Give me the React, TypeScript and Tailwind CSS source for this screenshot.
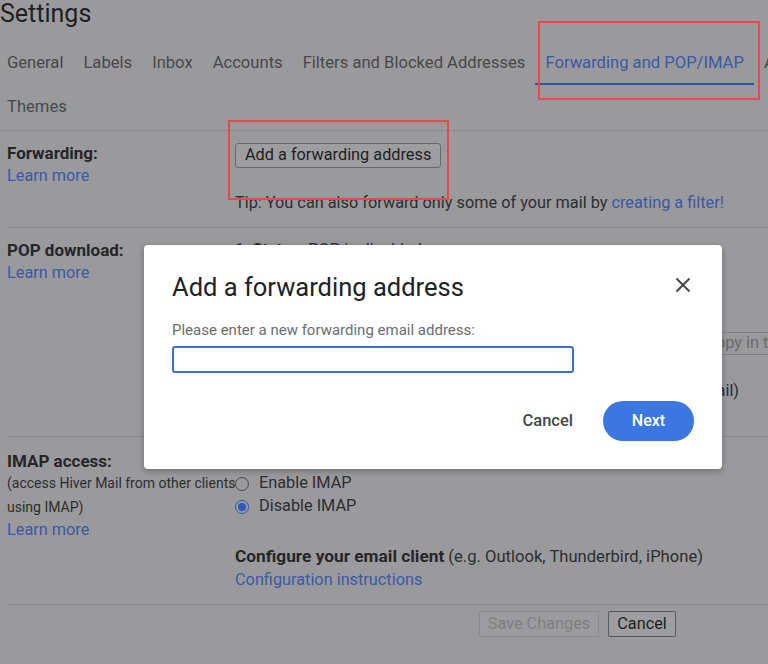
import React from "react";

const tabs = [
  "General",
  "Labels",
  "Inbox",
  "Accounts",
  "Filters and Blocked Addresses",
  "Forwarding and POP/IMAP",
  "Add-ons",
];

function Radio({ checked, label }: { checked?: boolean; label: string }) {
  return (
    <label className="flex items-center h-[23px] text-[16.3px] text-[#2d2d2f]">
      <span
        className={
          checked
            ? "w-[14px] h-[14px] rounded-full border border-[#2c58c0] flex items-center justify-center"
            : "w-[14px] h-[14px] rounded-full border border-[#4a4a4c]"
        }
      >
        {checked && <span className="w-[8px] h-[8px] rounded-full bg-[#2c58c0]" />}
      </span>
      <span className="ml-[10px]">{label}</span>
    </label>
  );
}

function Divider({ inset }: { inset?: boolean }) {
  return <div className={inset ? "ml-[7px] h-px bg-[#8b8b8d]" : "h-px bg-[#8b8b8d]"} />;
}

export default function App() {
  return (
    <div className="relative w-[768px] h-[664px] overflow-hidden bg-[#9a9a9c] font-['Roboto',sans-serif] text-[#2d2d2f]">
      <div className="w-[1000px]">
        <h1 className="h-[40px] text-[25px] leading-[28px] text-[#1f1f21]">Settings</h1>

        <nav className="flex h-[45px] ml-[-1px] whitespace-nowrap text-[16.6px] text-[#48484a]">
          {tabs.map((t) =>
            t === "Forwarding and POP/IMAP" ? (
              <div
                key={t}
                className="flex items-center px-[10px] pt-[4px] border-b-2 border-[#2f4f9f] text-[#3a58a6]"
              >
                {t}
              </div>
            ) : (
              <div key={t} className="flex items-center px-[10px] pt-[2px] first:pl-[8px]">
                {t}
              </div>
            )
          )}
        </nav>
        <div className="flex items-center h-[45px] pl-[7px] text-[16.6px] text-[#48484a]">Themes</div>
        <Divider />

        {/* Forwarding */}
        <section className="flex pl-[7px] pt-[12px] pb-[14px] text-[16.3px]">
          <div className="w-[228px] shrink-0">
            <div className="text-[17px] font-bold leading-[20px] text-[#262628]">Forwarding:</div>
            <div className="mt-[3px] leading-[20px] text-[#3a58a6]">Learn more</div>
          </div>
          <div>
            <button className="h-[25px] px-[9px] border border-[#6a6a6c] rounded-[3px] bg-[#9e9ea0] text-[16.3px] leading-none text-[#1f1f21]">
              Add a forwarding address
            </button>
            <div className="mt-[25px] leading-[20px] whitespace-nowrap">
              Tip: You can also forward only some of your mail by{" "}
              <span className="text-[#3a58a6]">creating a filter!</span>
            </div>
          </div>
        </section>
        <Divider inset />

        {/* POP */}
        <section className="flex pl-[7px] pt-[12px] pb-[12px] text-[16.3px]">
          <div className="w-[228px] shrink-0">
            <div className="text-[17px] font-bold leading-[20px] text-[#262628]">POP download:</div>
            <div className="mt-[3px] leading-[20px] text-[#3a58a6]">Learn more</div>
          </div>
          <div className="whitespace-nowrap">
            <div className="leading-[20px]">
              1. <b>Status:</b> POP is disabled
            </div>
            <div className="mt-[4px]">
              <Radio label="Enable POP for all mail" />
              <Radio label="Enable POP for mail that arrives from now on" />
            </div>
            <div className="mt-[22px] flex items-center h-[23px]">
              <span>2. When messages are accessed with POP</span>
              <span className="ml-[32px] h-[23px] flex items-center px-[6px] border border-[#7e7e80] text-[#6a6a6c]">
                keep Hiver Mail's copy in the Inbox
              </span>
            </div>
            <div className="mt-[25px] leading-[20px]">
              <b className="text-[17px] text-[#262628]">3. Configure your email client</b>{" "}
              <span className="ml-[8px]">(e.g. Outlook, Eudora, Netscape Mail)</span>
            </div>
            <div className="mt-[3px] leading-[20px] text-[#3a58a6]">Configuration instructions</div>
          </div>
        </section>
        <Divider inset />

        {/* IMAP */}
        <section className="flex pl-[7px] pt-[14px] pb-[14px] text-[16.3px]">
          <div className="w-[228px] shrink-0 whitespace-nowrap">
            <div className="text-[17px] font-bold leading-[20px] text-[#262628]">IMAP access:</div>
            <div className="text-[14px] leading-[24px]">
              (access Hiver Mail from other clients
              <br />
              using IMAP)
            </div>
            <div className="mt-[1px] leading-[20px] text-[#3a58a6]">Learn more</div>
          </div>
          <div className="pt-[21px] whitespace-nowrap">
            <Radio label="Enable IMAP" />
            <Radio checked label="Disable IMAP" />
            <div className="mt-[28px] leading-[20px]">
              <b className="text-[17.3px] text-[#262628]">Configure your email client</b>{" "}
              <span className="text-[16.6px]">(e.g. Outlook, Thunderbird, iPhone)</span>
            </div>
            <div className="mt-[3px] leading-[20px] text-[#3a58a6]">Configuration instructions</div>
          </div>
        </section>
        <Divider inset />

        <div className="flex gap-[9px] pl-[479px] mt-[6px]">
          <button
            disabled
            className="h-[26px] w-[120px] border border-[#8c8c8e] rounded-[2px] bg-[#9c9c9e] text-[16.3px] text-[#7e7e80]"
          >
            Save Changes
          </button>
          <button className="h-[26px] w-[68px] border border-[#5a5a5c] rounded-[2px] bg-[#9e9ea0] text-[16.3px] text-[#1f1f21]">
            Cancel
          </button>
        </div>
      </div>

      {/* dialog */}
      <div className="absolute left-[144px] top-[245px] w-[578px] h-[224px] bg-white rounded-[4px] shadow-[0_2px_6px_rgba(0,0,0,0.3)] pt-[26px] px-[28px] pb-[28px]">
        <div className="flex items-center justify-between h-[32px]">
          <h2 className="text-[25.5px] leading-[32px] text-[#202124]">Add a forwarding address</h2>
          <button className="w-[22px] h-[22px] mt-[-4px] flex items-center justify-center">
            <svg width="16" height="16" viewBox="0 0 16 16" fill="none" stroke="#444746" strokeWidth="2">
              <path d="M1.5 1.5 L14.5 14.5 M14.5 1.5 L1.5 14.5" />
            </svg>
          </button>
        </div>
        <div className="mt-[17px] text-[15px] leading-[20px] text-[#6b6d70]">
          Please enter a new forwarding email address:
        </div>
        <input
          className="mt-[6px] block w-[402px] h-[27px] border-2 border-[#3b6fd8] rounded-[3px] outline-none px-[4px]"
          type="text"
        />
        <div className="mt-[28px] flex justify-end items-center gap-[30px]">
          <button className="text-[16.5px] font-medium text-[#444746]">Cancel</button>
          <button className="w-[91px] h-[40px] rounded-full bg-[#3b76e1] text-[16px] font-medium text-white">
            Next
          </button>
        </div>
      </div>

      {/* annotation boxes */}
      <div className="absolute left-[538px] top-[21px] w-[222px] h-[79px] border-2 border-[#e84a4a]" />
      <div className="absolute left-[228px] top-[120px] w-[221px] h-[80px] border-2 border-[#e84a4a]" />
    </div>
  );
}
